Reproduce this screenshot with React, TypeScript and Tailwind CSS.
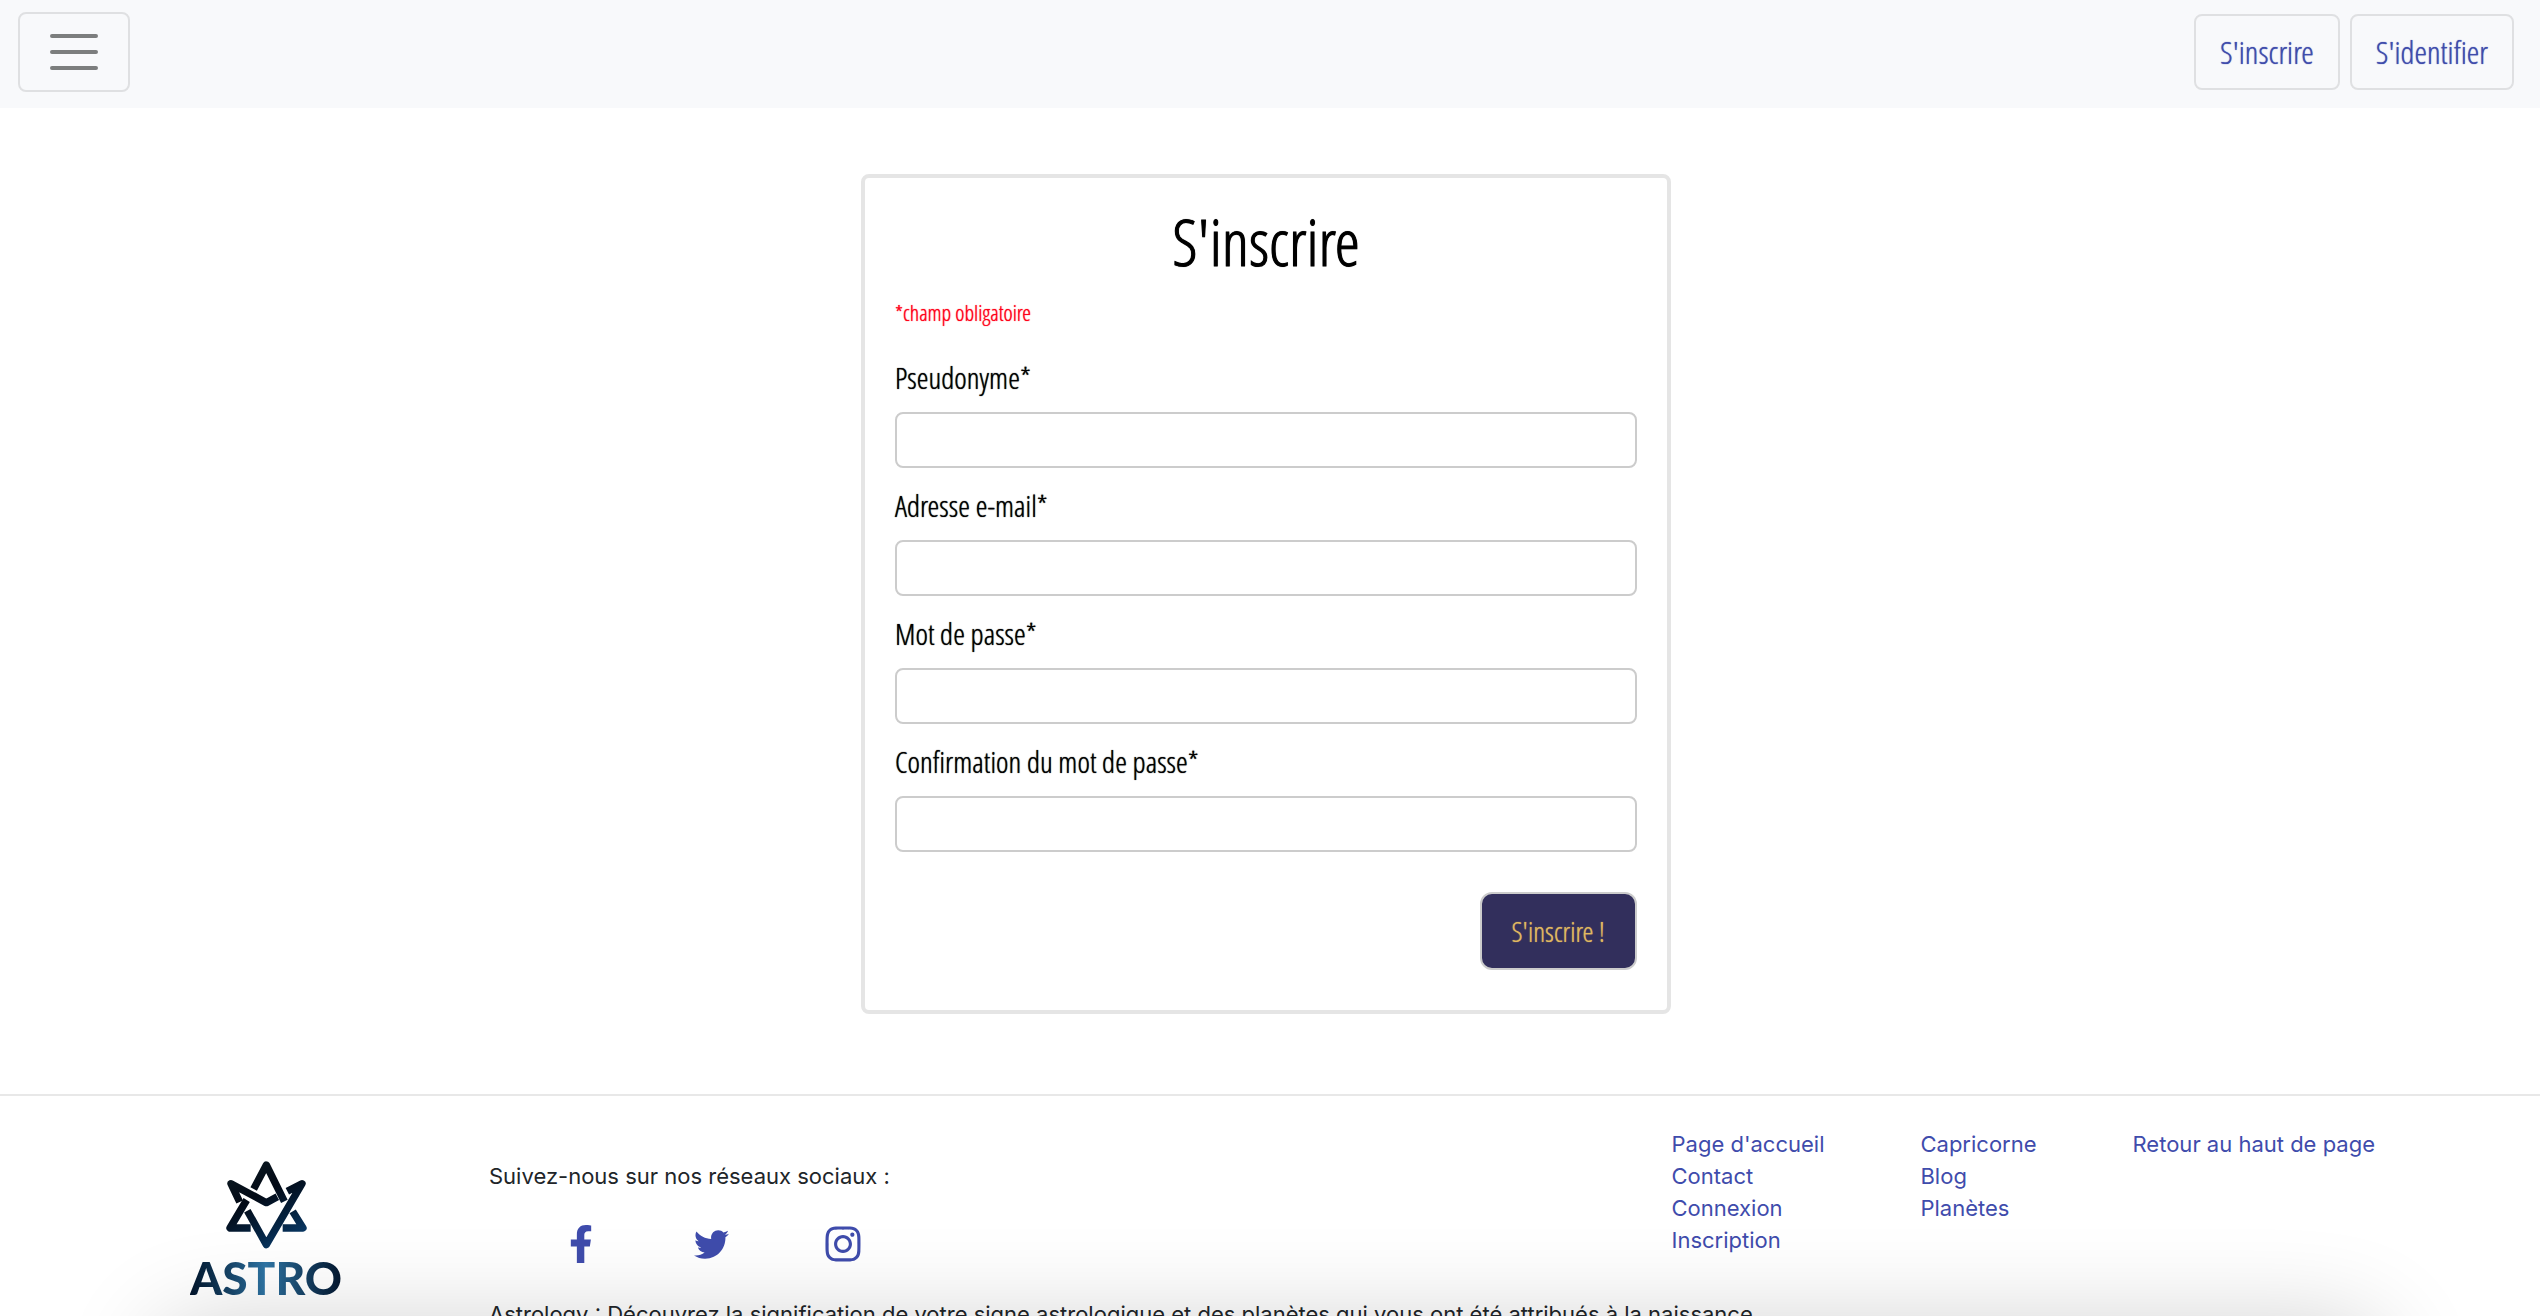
import { FaFacebookF, FaInstagram, FaTwitter } from "react-icons/fa";

const fields = [
  { id: "pseudo", label: "Pseudonyme*", type: "text" },
  { id: "email", label: "Adresse e-mail*", type: "email" },
  { id: "password", label: "Mot de passe*", type: "password" },
  { id: "confirmation", label: "Confirmation du mot de passe*", type: "password" },
];

const linkColumns = [
  ["Page d'accueil", "Contact", "Connexion", "Inscription"],
  ["Capricorne", "Blog", "Planètes"],
  ["Retour au haut de page"],
];

const socials = [
  { name: "Facebook", Icon: FaFacebookF, size: "h-[38px] w-[38px]" },
  { name: "Twitter", Icon: FaTwitter, size: "h-[35px] w-[35px]" },
  { name: "Instagram", Icon: FaInstagram, size: "h-10 w-10" },
];

function Navbar() {
  return (
    <header className="flex items-center justify-between bg-[#f8f9fb] pt-3 pr-[26px] pb-4 pl-[18px]">
      <button
        type="button"
        aria-label="Menu"
        className="flex h-20 w-28 items-center justify-center rounded-lg border-2 border-[#dfe0e2]"
      >
        <svg viewBox="0 0 60 60" className="h-[60px] w-[60px]" stroke="#7c7e7e" strokeWidth="4" strokeLinecap="round">
          <path d="M8 14h44M8 30h44M8 46h44" />
        </svg>
      </button>
      <nav className="flex gap-2.5">
        {["S'inscrire", "S'identifier"].map((text) => (
          <a
            key={text}
            href="#"
            className="rounded-lg border-2 border-[#dfe0e2] px-6 py-3.5 font-['Open_Sans_Condensed_Light','Open_Sans',sans-serif] text-[32px] leading-11 text-[#3f4cac] [text-shadow:0_0_1px_currentColor]"
          >
            {text}
          </a>
        ))}
      </nav>
    </header>
  );
}

function SignupForm() {
  return (
    <form className="w-[810px] rounded-lg border-4 border-[#e5e5e5] px-[30px] pt-5 pb-10 font-['Open_Sans_Condensed_Light','Open_Sans',sans-serif] text-black [text-shadow:0_0_1px_currentColor]">
      <h1 className="text-center text-[64px] leading-[88px] [-webkit-text-stroke:1px_black]">S'inscrire</h1>
      <p className="mt-2 mb-[26px] text-[22px] leading-9 text-[#ff0018] [text-shadow:0_0_1px_currentColor]">*champ obligatoire</p>
      <div className="flex flex-col gap-4">
        {fields.map((field) => (
          <div key={field.id} className="flex flex-col gap-3">
            <label htmlFor={field.id} className="text-3xl leading-11">
              {field.label}
            </label>
            <input
              id={field.id}
              type={field.type}
              className="h-14 w-full rounded-lg border-2 border-[#cccccc] bg-white px-4 text-2xl"
            />
          </div>
        ))}
      </div>
      <div className="mt-10 flex justify-end">
        <button
          type="submit"
          className="rounded-xl border-2 border-[#cccccc] bg-[#322f5c] px-[30px] py-[17px] text-[28px] leading-10 text-[#e0b960] [text-shadow:0_0_1px_currentColor]"
        >
          S'inscrire !
        </button>
      </div>
    </form>
  );
}

function Logo() {
  return (
    <a href="#" aria-label="Astro" className="mt-16 flex w-[152px] flex-col items-center">
      <svg viewBox="220 240 255 270" className="h-[90px] w-[85px]" fill="none" stroke="url(#night)" strokeWidth="22" strokeLinejoin="round">
        <defs>
          <linearGradient id="night" gradientUnits="userSpaceOnUse" x1="260" y1="250" x2="400" y2="500">
            <stop offset="0" stopColor="#0c1a22" />
            <stop offset="0.4" stopColor="#030a16" />
            <stop offset="0.75" stopColor="#052341" />
            <stop offset="1" stopColor="#0a3a68" />
          </linearGradient>
        </defs>
        <path d="M309 327 347 255 401 364" />
        <path d="M267 366 241 311 347 368 380 350" />
        <path d="M290 392 347 494 454 311 410 334" />
        <path d="M288 360 238 444H300" />
        <path d="M426 394 457 444H396" />
      </svg>
      <span className="mt-1 bg-linear-to-r from-[#03152c] via-[#2f76a6] to-[#04162e] bg-clip-text font-['Lato',sans-serif] text-[46px] leading-12 font-black text-transparent">
        ASTRO
      </span>
    </a>
  );
}

function Footer() {
  return (
    <footer className="flex items-start gap-[147px] border-t-2 border-[#e8e8e8] pr-[165px] pl-[190px] font-['Inter',sans-serif] text-[22px] leading-8 text-[#212529]">
      <Logo />
      <div className="flex-1 pt-8">
        <div className="flex items-start justify-between">
          <div className="pt-8">
            <p>Suivez-nous sur nos réseaux sociaux :</p>
            <div className="mt-8 flex items-center gap-[94px] pl-[73px] text-[#3f4cac]">
              {socials.map(({ name, Icon, size }) => (
                <a key={name} href="#" aria-label={name}>
                  <Icon className={size} />
                </a>
              ))}
            </div>
          </div>
          <div className="flex gap-24 text-[#3f4cac]">
            {linkColumns.map((links) => (
              <ul key={links[0]}>
                {links.map((link) => (
                  <li key={link}>
                    <a href="#">{link}</a>
                  </li>
                ))}
              </ul>
            ))}
          </div>
        </div>
        <p className="mt-[34px]">
          Astrology : Découvrez la signification de votre signe astrologique et des planètes qui vous ont été attribués à la naissance
        </p>
      </div>
    </footer>
  );
}

export default function App() {
  return (
    <div className="relative h-screen overflow-hidden bg-white">
      <Navbar />
      <main className="flex justify-center pt-[66px] pr-2 pb-20">
        <SignupForm />
      </main>
      <Footer />
      {/* Soft shade rising from the bottom edge */}
      <div className="pointer-events-none absolute inset-x-[170px] top-full mt-5 h-40 rounded-3xl shadow-[0_0_100px_10px_rgba(0,0,0,0.2)]" />
    </div>
  );
}
